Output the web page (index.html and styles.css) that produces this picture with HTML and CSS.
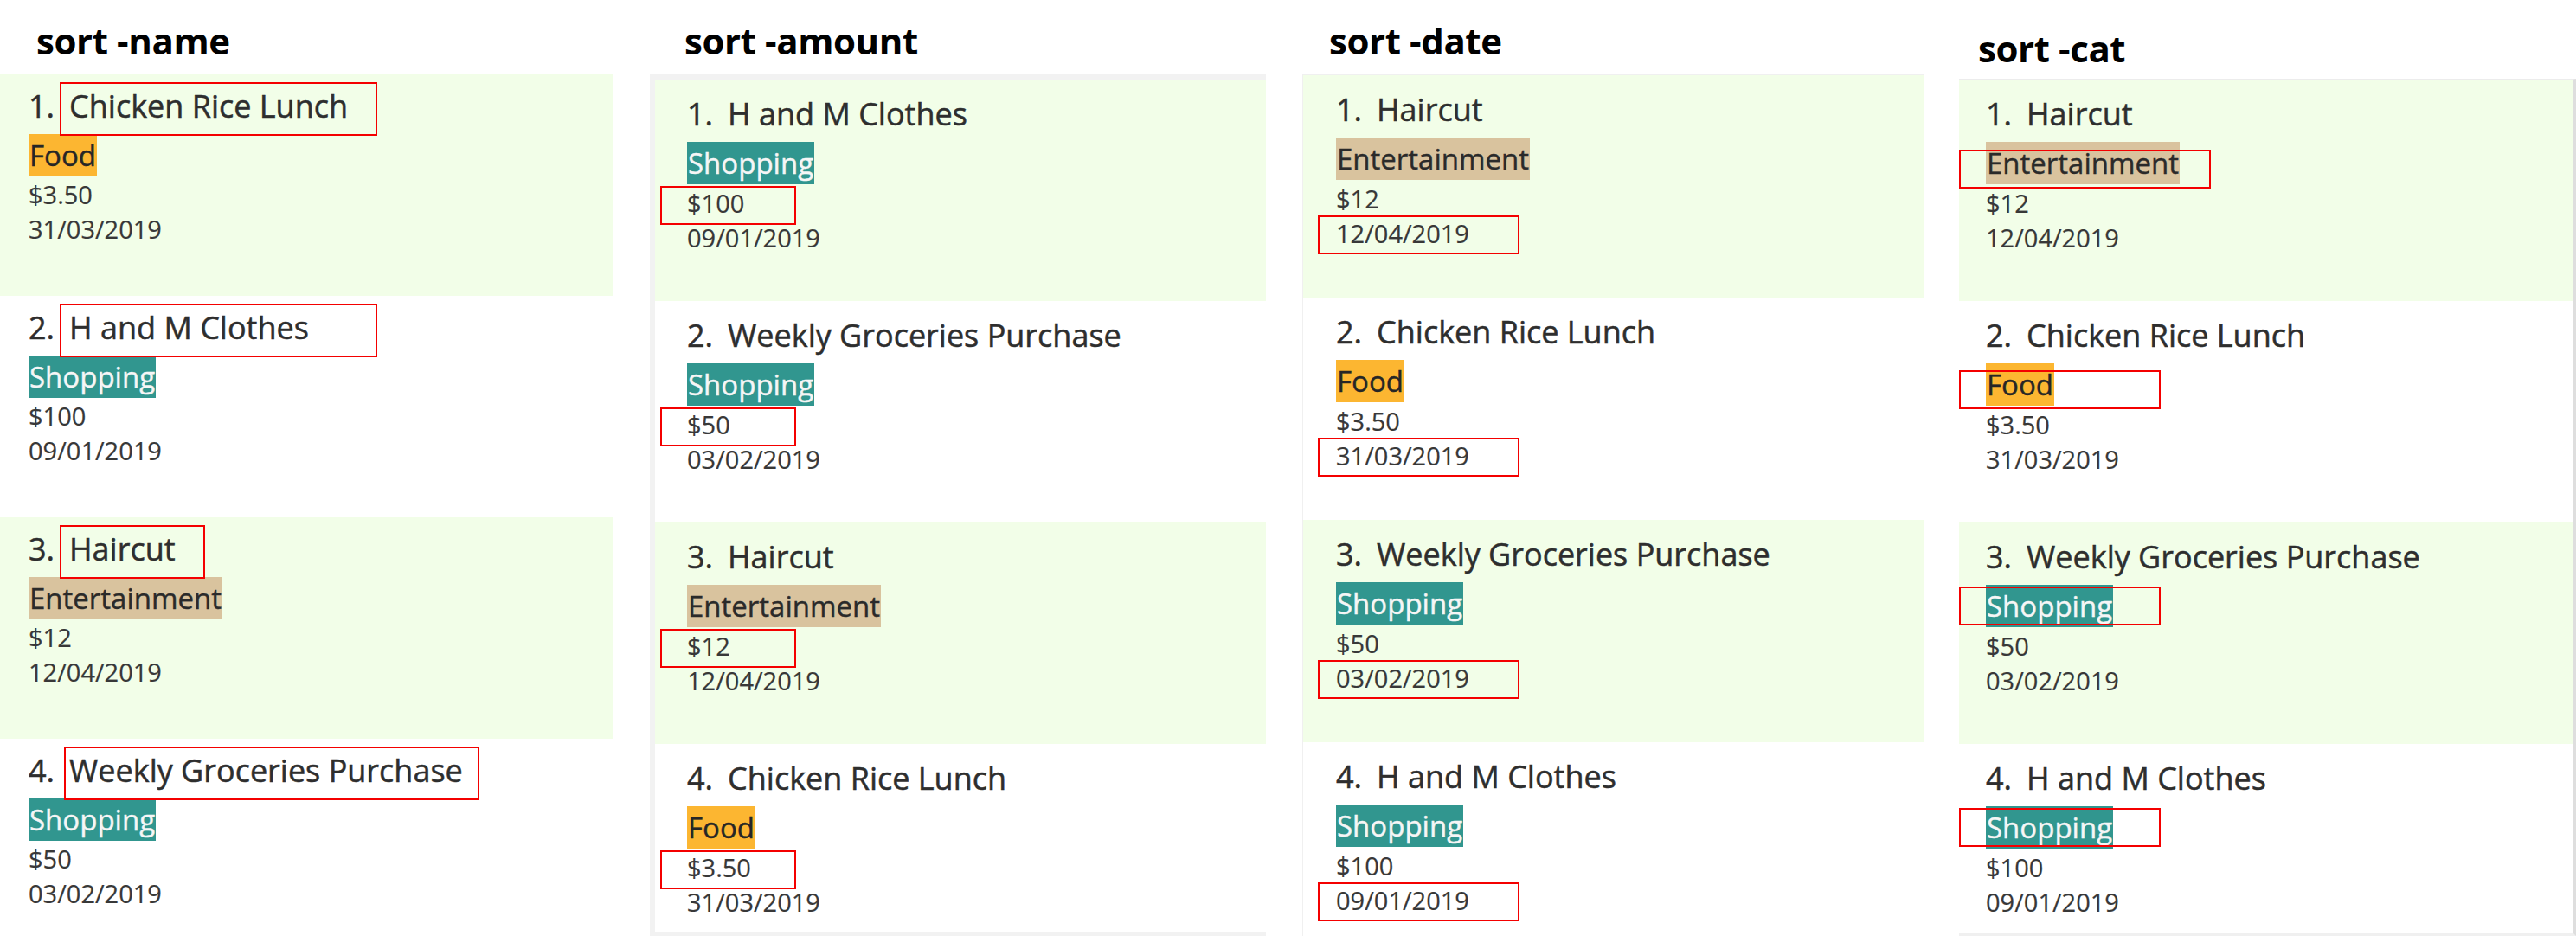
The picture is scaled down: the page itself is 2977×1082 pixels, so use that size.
FILE: index.html
```html
<!DOCTYPE html>
<html lang="en">
<head>
<meta charset="utf-8">
<title>Sort commands</title>
<link rel="stylesheet" href="styles.css">
</head>
<body>
<main class="board">

  <section class="panel p-name">
    <h2 class="panel-title">sort -name</h2>
    <ol class="list">
      <li class="card odd">
        <div class="head"><span class="idx">1.</span><span class="name">Chicken Rice Lunch</span></div>
        <span class="tag food">Food</span>
        <div class="amt">$3.50</div>
        <div class="date">31/03/2019</div>
        <span class="mark mk-name"></span>
      </li>
      <li class="card">
        <div class="head"><span class="idx">2.</span><span class="name">H and M Clothes</span></div>
        <span class="tag shop">Shopping</span>
        <div class="amt">$100</div>
        <div class="date">09/01/2019</div>
        <span class="mark mk-name"></span>
      </li>
      <li class="card odd">
        <div class="head"><span class="idx">3.</span><span class="name">Haircut</span></div>
        <span class="tag ent">Entertainment</span>
        <div class="amt">$12</div>
        <div class="date">12/04/2019</div>
        <span class="mark mk-name mk-short"></span>
      </li>
      <li class="card">
        <div class="head"><span class="idx">4.</span><span class="name">Weekly Groceries Purchase</span></div>
        <span class="tag shop">Shopping</span>
        <div class="amt">$50</div>
        <div class="date">03/02/2019</div>
        <span class="mark mk-name mk-long"></span>
      </li>
    </ol>
  </section>

  <section class="panel p-amount">
    <h2 class="panel-title">sort -amount</h2>
    <ol class="list">
      <li class="card odd">
        <div class="head"><span class="idx">1.</span><span class="name">H and M Clothes</span></div>
        <span class="tag shop">Shopping</span>
        <div class="amt"><span class="mark mk-amt"></span>$100</div>
        <div class="date">09/01/2019</div>
      </li>
      <li class="card">
        <div class="head"><span class="idx">2.</span><span class="name">Weekly Groceries Purchase</span></div>
        <span class="tag shop">Shopping</span>
        <div class="amt"><span class="mark mk-amt"></span>$50</div>
        <div class="date">03/02/2019</div>
      </li>
      <li class="card odd">
        <div class="head"><span class="idx">3.</span><span class="name">Haircut</span></div>
        <span class="tag ent">Entertainment</span>
        <div class="amt"><span class="mark mk-amt"></span>$12</div>
        <div class="date">12/04/2019</div>
      </li>
      <li class="card">
        <div class="head"><span class="idx">4.</span><span class="name">Chicken Rice Lunch</span></div>
        <span class="tag food">Food</span>
        <div class="amt"><span class="mark mk-amt"></span>$3.50</div>
        <div class="date">31/03/2019</div>
      </li>
    </ol>
  </section>

  <section class="panel p-date">
    <h2 class="panel-title">sort -date</h2>
    <ol class="list">
      <li class="card odd">
        <div class="head"><span class="idx">1.</span><span class="name">Haircut</span></div>
        <span class="tag ent">Entertainment</span>
        <div class="amt">$12</div>
        <div class="date"><span class="mark mk-date"></span>12/04/2019</div>
      </li>
      <li class="card">
        <div class="head"><span class="idx">2.</span><span class="name">Chicken Rice Lunch</span></div>
        <span class="tag food">Food</span>
        <div class="amt">$3.50</div>
        <div class="date"><span class="mark mk-date"></span>31/03/2019</div>
      </li>
      <li class="card odd">
        <div class="head"><span class="idx">3.</span><span class="name">Weekly Groceries Purchase</span></div>
        <span class="tag shop">Shopping</span>
        <div class="amt">$50</div>
        <div class="date"><span class="mark mk-date"></span>03/02/2019</div>
      </li>
      <li class="card">
        <div class="head"><span class="idx">4.</span><span class="name">H and M Clothes</span></div>
        <span class="tag shop">Shopping</span>
        <div class="amt">$100</div>
        <div class="date"><span class="mark mk-date"></span>09/01/2019</div>
      </li>
    </ol>
  </section>

  <section class="panel p-cat">
    <h2 class="panel-title">sort -cat</h2>
    <ol class="list">
      <li class="card odd">
        <div class="head"><span class="idx">1.</span><span class="name">Haircut</span></div>
        <span class="tag ent"><span class="mark mk-tag mk-tag-wide"></span>Entertainment</span>
        <div class="amt">$12</div>
        <div class="date">12/04/2019</div>
      </li>
      <li class="card">
        <div class="head"><span class="idx">2.</span><span class="name">Chicken Rice Lunch</span></div>
        <span class="tag food"><span class="mark mk-tag mk-tag-low"></span>Food</span>
        <div class="amt">$3.50</div>
        <div class="date">31/03/2019</div>
      </li>
      <li class="card odd">
        <div class="head"><span class="idx">3.</span><span class="name">Weekly Groceries Purchase</span></div>
        <span class="tag shop"><span class="mark mk-tag"></span>Shopping</span>
        <div class="amt">$50</div>
        <div class="date">03/02/2019</div>
      </li>
      <li class="card">
        <div class="head"><span class="idx">4.</span><span class="name">H and M Clothes</span></div>
        <span class="tag shop"><span class="mark mk-tag"></span>Shopping</span>
        <div class="amt">$100</div>
        <div class="date">09/01/2019</div>
      </li>
    </ol>
  </section>

</main>
</body>
</html>
```

FILE: styles.css
```css
* { box-sizing: border-box; }

html, body {
  margin: 0;
  padding: 0;
  background: #ffffff;
}

body {
  width: 2977px;
  height: 1082px;
  overflow: hidden;
  font-family: "Open Sans", "Noto Sans", sans-serif;
  color: #333333;
}

.board {
  display: flex;
  align-items: flex-start;
  height: 1082px;
}

.panel {
  flex: none;
  display: flex;
  flex-direction: column;
  height: 1082px;
}

.p-name   { width: 708px; }
.p-amount { width: 712px; margin-left: 43px; }
.p-date   { width: 719px; margin-left: 42px; }
.p-cat    { width: 713px; margin-left: 40px; }

.panel-title {
  margin: 17px 0 9px;
  font-size: 42px;
  line-height: 60px;
  font-weight: 700;
  color: #000000;
  letter-spacing: -0.4px;
}

.p-name .panel-title   { padding-left: 42px; }
.p-amount .panel-title { padding-left: 40px; }
.p-date .panel-title   { padding-left: 31px; }
.p-cat .panel-title    { padding-left: 22px; margin: 26px 0 5px; }

.list {
  list-style: none;
  margin: 0;
  padding: 0;
  flex: 1;
  overflow: hidden;
}

.p-amount .list {
  border-top: 6px solid #f2f2f2;
  border-left: 6px solid #f2f2f2;
  border-bottom: 5px solid #f2f2f2;
}

.p-date .list {
  border-top: 1px solid #f0f0f0;
  border-left: 1px solid #f0f0f0;
}

.p-cat .list {
  border-top: 1px solid #ececec;
  border-right: 4px solid #dedede;
  border-bottom: 4px solid #f0f0f0;
}

.card {
  position: relative;
  flex: none;
  display: flex;
  flex-direction: column;
  align-items: flex-start;
  height: 256px;
  padding: 15px 0 0 37px;
  background: #ffffff;
}

.card.odd { background: #f2fee8; }

.p-name .card { padding: 12px 0 0 33px; }
.p-date .card { padding-left: 38px; height: 257px; }
.p-cat .card  { padding-left: 31px; }

.head {
  display: flex;
  align-items: baseline;
  height: 50px;
  font-size: 36px;
  line-height: 50px;
  white-space: nowrap;
  color: #2e2e2e;
  -webkit-text-stroke: 0.5px currentColor;
}

.idx { margin-right: 17px; }

.tag {
  position: relative;
  display: block;
  margin-top: 7px;
  height: 49px;
  padding: 0 1px;
  font-size: 33px;
  line-height: 49px;
  white-space: nowrap;
  -webkit-text-stroke: 0.4px currentColor;
}

.tag.food { background: #fcb631; color: #262626; }
.tag.shop { background: #31968f; color: #f6f6f6; }
.tag.ent  { background: #d9c39e; color: #2a2a2a; }

.amt,
.date {
  position: relative;
  font-size: 29px;
  line-height: 40px;
  color: #383838;
  -webkit-text-stroke: 0.2px currentColor;
}

.amt { margin-top: 2px; }
.p-name .amt { margin-top: 1px; }

/* red annotation boxes drawn over the entries */
.mark {
  position: absolute;
  border: 2px solid #f40000;
  pointer-events: none;
  -webkit-text-stroke: 0;
}

.mk-name  { left: 69px; top: 9px; width: 367px; height: 62px; }
.mk-short { width: 168px; }
.mk-long  { left: 74px; width: 480px; }

.mk-amt  { left: -31px; top: 0; width: 157px; height: 45px; }
.mk-date { left: -21px; top: -1px; width: 233px; height: 45px; }

.mk-tag      { left: -31px; top: 2px; width: 233px; height: 45px; }
.mk-tag-wide { top: 9px; width: 291px; }
.mk-tag-low  { top: 8px; }
```
